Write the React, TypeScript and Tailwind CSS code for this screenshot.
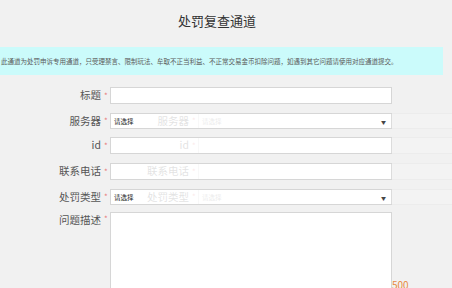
import React from "react";

const font = { fontFamily: '"Noto Sans CJK SC", "Noto Sans", sans-serif' };

function Arrow() {
  return <span className="text-[5px] leading-none text-[#222] mr-[5px]">▼</span>;
}

function Row({
  label,
  kind,
  h,
  mt,
  ghost,
}: {
  label: string;
  kind: "input" | "select";
  h: string;
  mt: string;
  ghost?: boolean;
}) {
  return (
    <div className={`flex items-center ${mt}`}>
      <div className="w-[101px] text-right text-[10.5px] leading-none text-[#555]">{label}</div>
      <div className="w-[9px] text-[8px] leading-none text-[#e87a7a] pl-[3px]">*</div>
      <div
        className={`w-[282px] ${h} bg-white border border-[#d6d6d6] flex items-center justify-between`}
      >
        {kind === "select" ? (
          <>
            <span className={`pl-[3px] text-[6.5px] leading-none ${ghost ? "text-[#888]" : "text-[#222]"}`}>请选择</span>
            {ghost ? null : <Arrow />}
          </>
        ) : null}
      </div>
    </div>
  );
}

export default function App() {
  return (
    <div
      className="relative w-[452px] h-[288px] overflow-hidden bg-[#f1f1f1]"
      style={font}
    >
      <div className="h-[47px] flex justify-center pt-[12px]">
        <div className="text-[13px] leading-[18px] text-[#333] mr-[18px]">处罚复查通道</div>
      </div>
      <div className="w-[443px] h-[28px] bg-[#cbfbfb] flex items-center pl-[1px] text-[6.5px] leading-none text-[#5a5a5a] whitespace-nowrap">
        此通道为处罚申诉专用通道，只受理禁言、限制玩法、牟取不正当利益、不正常交易金币扣除问题，如遇到其它问题请使用对应通道提交。
      </div>
      <div className="mt-[12px]">
        <Row label="标题" kind="input" h="h-[17px]" mt="" />
        <Row label="服务器" kind="select" h="h-[16px]" mt="mt-[9px]" />
        <Row label="id" kind="input" h="h-[17px]" mt="mt-[8px]" />
        <Row label="联系电话" kind="input" h="h-[17px]" mt="mt-[9px]" />
        <Row label="处罚类型" kind="select" h="h-[16px]" mt="mt-[9px]" />
        <div className="flex items-start mt-[7px]">
          <div className="w-[101px] text-right text-[10.5px] leading-none text-[#555] pt-[3px]">问题描述</div>
          <div className="w-[9px] text-[8px] leading-none text-[#e87a7a] pl-[3px] pt-[3px]">*</div>
          <div className="w-[282px] h-[100px] bg-white border border-[#d6d6d6]" />
          <div className="self-start mt-[68px] text-[10px] leading-none text-[#e8893e]">500</div>
        </div>
      </div>
      <div className="absolute left-[88px] top-[113px] opacity-[0.16] pointer-events-none">
        <Row label="服务器" kind="select" h="h-[16px]" mt="" ghost />
        <Row label="id" kind="input" h="h-[17px]" mt="mt-[8px]" />
        <Row label="联系电话" kind="input" h="h-[17px]" mt="mt-[9px]" />
        <Row label="处罚类型" kind="select" h="h-[16px]" mt="mt-[9px]" ghost />
      </div>
    </div>
  );
}
